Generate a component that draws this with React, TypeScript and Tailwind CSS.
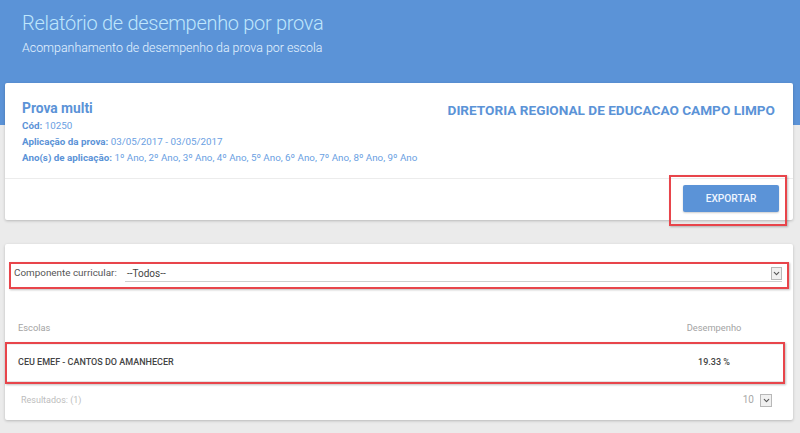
import { ChevronDown } from "lucide-react";

const anos = ["1º Ano", "2º Ano", "3º Ano", "4º Ano", "5º Ano", "6º Ano", "7º Ano", "8º Ano", "9º Ano"];

function SelectArrow({ size = "h-[13px] w-[11px]" }: { size?: string }) {
  return (
    <span className={`grid ${size} place-items-center border border-[#b8b8b8] bg-[#f0f0f0] text-[#555]`}>
      <ChevronDown size={9} strokeWidth={3} />
    </span>
  );
}

export default function App() {
  return (
    <div className="min-h-[433px] bg-[#ebebeb] font-['Roboto',sans-serif]">
      {/* Cabeçalho azul */}
      <header className="h-[125px] bg-[#5b93d7] px-[22px] pt-[9px]">
        <h1 className="text-[20px] font-light leading-[28px] tracking-[-0.3px] text-[#bfe6fc]">
          Relatório de desempenho por prova
        </h1>
        <p className="mt-[3px] text-[12.4px] font-light leading-[16px] text-[#e6f3ff]">
          Acompanhamento de desempenho da prova por escola
        </p>
      </header>

      <main className="-mt-[42px] space-y-[24px] pl-[5px] pr-[7px]">
        {/* Dados da prova */}
        <section className="rounded-[2px] bg-white shadow-[0_1px_3px_rgba(0,0,0,0.22)]">
          <div className="flex h-[96px] justify-between border-b border-[#ececec] pl-[17px] pr-[18px] pt-[16px]">
            <div className="whitespace-nowrap text-[9.8px] leading-[16px] text-[#6aa0e2]">
              <div className="mb-[1px] text-[13.8px] font-bold leading-[18px] text-[#5b93d7]">Prova multi</div>
              <div>
                <strong className="font-bold text-[#5b93d7]">Cód:</strong> 10250
              </div>
              <div>
                <strong className="font-bold text-[#5b93d7]">Aplicação da prova:</strong> 03/05/2017 - 03/05/2017
              </div>
              <div>
                <strong className="font-bold text-[#5b93d7]">Ano(s) de aplicação:</strong> {anos.join(", ")}
              </div>
            </div>
            <div className="whitespace-nowrap pt-[2px] text-[13.6px] font-bold leading-[18px] text-[#5b93d7]">
              DIRETORIA REGIONAL DE EDUCACAO CAMPO LIMPO
            </div>
          </div>
          <div className="flex h-[41px] items-start justify-end pr-[14px] pt-[6px]">
            <div className="relative">
              <button className="h-[27px] w-[96px] rounded-[2px] bg-[#5b93d7] text-[10.2px] font-medium text-[#eef5ff] shadow-[0_1px_2px_rgba(0,0,0,0.2)]">
                EXPORTAR
              </button>
              <span className="pointer-events-none absolute -bottom-[14px] -left-[14px] -right-[8px] -top-[10px] border-2 border-[#e8454b] shadow-[1px_1px_2px_rgba(0,0,0,0.25)]" />
            </div>
          </div>
        </section>

        {/* Desempenho por escola */}
        <section className="rounded-[2px] bg-white px-[4px] pb-[13px] pt-[18px] shadow-[0_1px_3px_rgba(0,0,0,0.22)]">
          <div className="flex h-[27px] items-center border-2 border-[#e8454b] pl-[3px] pr-[5px] shadow-[1px_1px_2px_rgba(0,0,0,0.25)]">
            <label className="w-[111px] shrink-0 whitespace-nowrap pb-[4px] text-[9.9px] text-[#555]">
              Componente curricular:
            </label>
            <div className="mb-[3px] flex h-[15px] flex-1 items-center justify-between border-b border-[#cfcfcf] pb-[1px]">
              <span className="pl-[2px] text-[10px] leading-[13px] text-[#444]">--Todos--</span>
              <SelectArrow />
            </div>
          </div>

          <div className="mt-[32px] flex px-[9px] text-[9.3px] leading-[14px] text-[#a3a3a3]">
            <span className="flex-1">Escolas</span>
            <span className="w-[120px] pr-[12px] text-center">Desempenho</span>
          </div>

          <div className="-ml-[4px] mr-[4px] mt-[7px] border-2 border-[#e8454b] shadow-[1px_1px_2px_rgba(0,0,0,0.25)]">
            <div className="flex h-[38px] items-center border-b border-t border-b-[#e2e2e2] border-t-[#f0f0f0] pl-[11px] text-[9px] font-medium text-[#444]">
              <span className="flex-1">CEU EMEF - CANTOS DO AMANHECER</span>
              <span className="w-[120px] pr-[18px] text-center">19.33 %</span>
            </div>
          </div>

          <div className="mt-[9px] flex items-center pl-[12px] pr-[17px] text-[9px] leading-[14px] text-[#bdbdbd]">
            <span className="flex-1">Resultados: (1)</span>
            <span className="mr-[6px] text-[10px] text-[#a8a8a8]">10</span>
            <SelectArrow size="h-[13px] w-[12px]" />
          </div>
        </section>
      </main>
    </div>
  );
}
